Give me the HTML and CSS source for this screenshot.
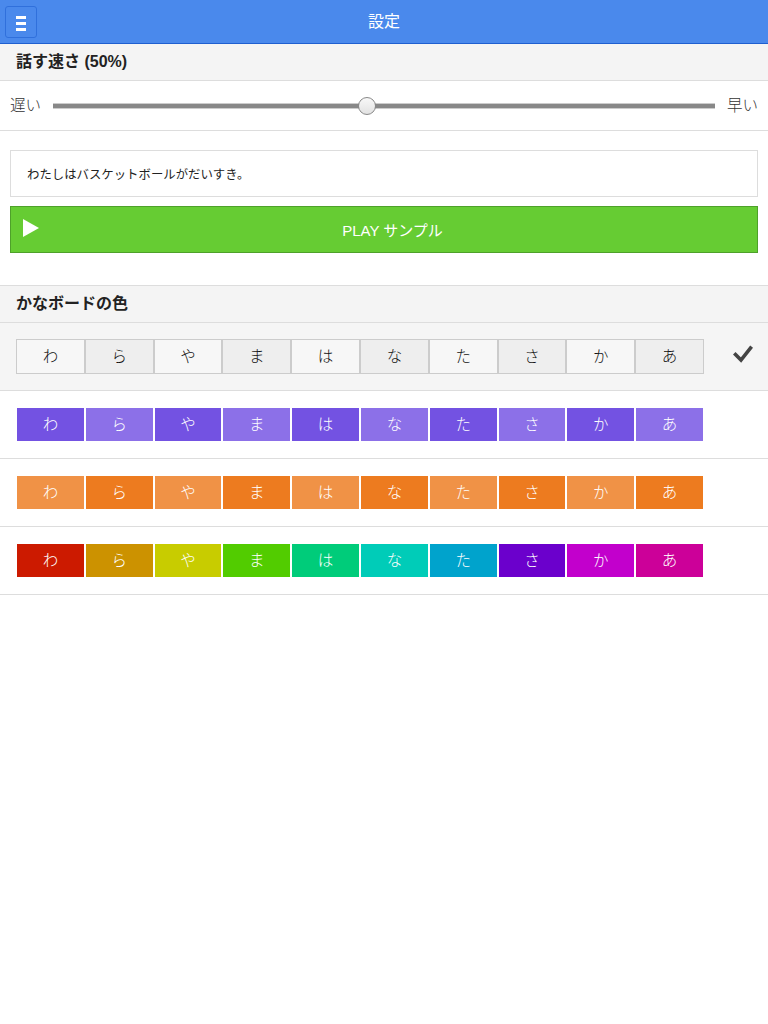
FILE: index.html
```html
<!DOCTYPE html>
<html lang="ja">
<head>
<meta charset="utf-8">
<title>設定</title>
<link rel="stylesheet" href="styles.css">
</head>
<body>
<header class="topbar">
  <button class="menu-btn" aria-label="menu"><span></span><span></span><span></span></button>
  <h1 class="topbar-title">設定</h1>
  <div></div>
</header>

<h2 class="section-title">話す速さ (50%)</h2>
<div class="speed-row">
  <span class="speed-label">遅い</span>
  <div class="slider">
    <div class="slider-track"></div>
    <div class="slider-thumb" style="left: 47.5%"></div>
  </div>
  <span class="speed-label">早い</span>
</div>

<div class="sample">
  <div class="sample-text">わたしはバスケットボールがだいすき。</div>
  <button class="play-btn">
    <svg class="play-icon" width="16" height="18" viewBox="0 0 16 18"><polygon points="0,0 16,9 0,18" fill="#fff"/></svg>
    <span class="play-label">PLAY サンプル</span>
  </button>
</div>

<h2 class="section-title section-title--top">かなボードの色</h2>
<ul class="palettes">
  <li class="palette palette--plain palette--selected">
    <span class="cell">わ</span><span class="cell">ら</span><span class="cell">や</span><span class="cell">ま</span><span class="cell">は</span><span class="cell">な</span><span class="cell">た</span><span class="cell">さ</span><span class="cell">か</span><span class="cell">あ</span>
    <svg class="check" width="20" height="18" viewBox="0 0 20 18"><polyline points="2.5,9.5 8,15 17.5,3" fill="none" stroke="#444" stroke-width="3.6" stroke-linejoin="miter" stroke-linecap="square"/></svg>
  </li>
  <li class="palette palette--purple">
    <span class="cell">わ</span><span class="cell">ら</span><span class="cell">や</span><span class="cell">ま</span><span class="cell">は</span><span class="cell">な</span><span class="cell">た</span><span class="cell">さ</span><span class="cell">か</span><span class="cell">あ</span>
  </li>
  <li class="palette palette--orange">
    <span class="cell">わ</span><span class="cell">ら</span><span class="cell">や</span><span class="cell">ま</span><span class="cell">は</span><span class="cell">な</span><span class="cell">た</span><span class="cell">さ</span><span class="cell">か</span><span class="cell">あ</span>
  </li>
  <li class="palette palette--rainbow">
    <span class="cell c1">わ</span><span class="cell c2">ら</span><span class="cell c3">や</span><span class="cell c4">ま</span><span class="cell c5">は</span><span class="cell c6">な</span><span class="cell c7">た</span><span class="cell c8">さ</span><span class="cell c9">か</span><span class="cell c10">あ</span>
  </li>
</ul>
</body>
</html>
```

FILE: styles.css
```css
* { box-sizing: border-box; }

body {
  margin: 0;
  font-family: "Liberation Sans", "Noto Sans CJK JP", sans-serif;
  color: #333;
  background: #fff;
}

.topbar {
  height: 44px;
  background: #4a89ec;
  border-bottom: 1px solid #1f5fcf;
  display: grid;
  grid-template-columns: 1fr auto 1fr;
  align-items: center;
}

.menu-btn {
  margin-left: 5px;
  width: 32px;
  height: 32px;
  border: 1px solid #3070dc;
  border-radius: 3px;
  background: transparent;
  padding: 9px 0 0 0;
  display: flex;
  flex-direction: column;
  align-items: center;
  gap: 3px;
  justify-self: start;
}

.menu-btn span {
  display: block;
  width: 10px;
  height: 3px;
  background: #fff;
}

.topbar-title {
  margin: -3px 0 0;
  font-size: 16px;
  font-weight: normal;
  color: #fff;
}

.section-title {
  margin: 0;
  height: 37px;
  line-height: 36px;
  padding: 0 16px;
  background: #f4f4f4;
  border-bottom: 1px solid #ddd;
  font-size: 16px;
  font-weight: bold;
  color: #222;
}

.section-title--top {
  border-top: 1px solid #ddd;
  height: 38px;
}

.speed-row {
  height: 50px;
  display: flex;
  align-items: center;
  padding: 0 10px;
  gap: 12px;
  border-bottom: 1px solid #ddd;
}

.speed-label {
  font-size: 15.5px;
  font-weight: 300;
  font-family: "Noto Sans CJK JP", sans-serif;
  color: #333;
  margin-bottom: 3px;
}

.slider {
  flex: 1;
  position: relative;
  height: 18px;
  display: flex;
  align-items: center;
}

.slider-track {
  width: 100%;
  height: 6px;
  background: #888;
  border: 1px solid #ccc;
  border-left: none;
  border-right: none;
}

.slider-thumb {
  position: absolute;
  top: 0;
  width: 18px;
  height: 18px;
  margin-left: -9px;
  border-radius: 50%;
  border: 1px solid #888;
  background: linear-gradient(#f8f8f8, #e2e2e2);
}

.sample {
  padding: 19px 10px 32px;
}

.sample-text {
  height: 47px;
  border: 1px solid #ddd;
  padding: 0 16px;
  display: flex;
  align-items: center;
  font-size: 12.4px;
  color: #222;
}

.play-btn {
  margin-top: 9px;
  width: 100%;
  height: 47px;
  background: #66cc33;
  border: 1px solid #4ea12a;
  color: #fff;
  display: flex;
  align-items: center;
  padding: 0 11px 0 12px;
  font-family: "Liberation Sans", "Noto Sans CJK JP", sans-serif;
  font-size: 15px;
}

.play-icon {
  flex: none;
  margin-top: -3px;
}

.play-label {
  flex: 1;
  text-align: center;
}

.palettes {
  list-style: none;
  margin: 0;
  padding: 0;
}

.palette {
  display: flex;
  align-items: center;
  padding: 16px;
  border-bottom: 1px solid #ddd;
}

.palette--selected {
  background: #f5f5f5;
}

.cell {
  flex: none;
  width: 68.8px;
  height: 35px;
  padding-bottom: 3px;
  border: 1px solid #fff;
  display: flex;
  align-items: center;
  justify-content: center;
  font-size: 15.5px;
  font-weight: 300;
  color: #fff;
  font-family: "Noto Sans CJK JP", sans-serif;
}

.palette--plain .cell {
  border-color: #ccc;
  color: #111;
  background: #f7f7f7;
}
.palette--plain .cell:nth-child(even) { background: #eeeeee; }

.palette--purple .cell { background: #7352e2; }
.palette--purple .cell:nth-child(even) { background: #8c70e8; }

.palette--orange .cell { background: #f09246; }
.palette--orange .cell:nth-child(even) { background: #ed7b1f; }

.c1 { background: #cc1a00; }
.c2 { background: #cc9200; }
.c3 { background: #c8cc00; }
.c4 { background: #52cc00; }
.c5 { background: #00cc7a; }
.c6 { background: #00ccb8; }
.c7 { background: #00a3cc; }
.c8 { background: #6b00cc; }
.c9 { background: #c200cc; }
.c10 { background: #cc0099; }

.check {
  margin-left: auto;
  margin-right: -1px;
  margin-top: -6px;
}
```
